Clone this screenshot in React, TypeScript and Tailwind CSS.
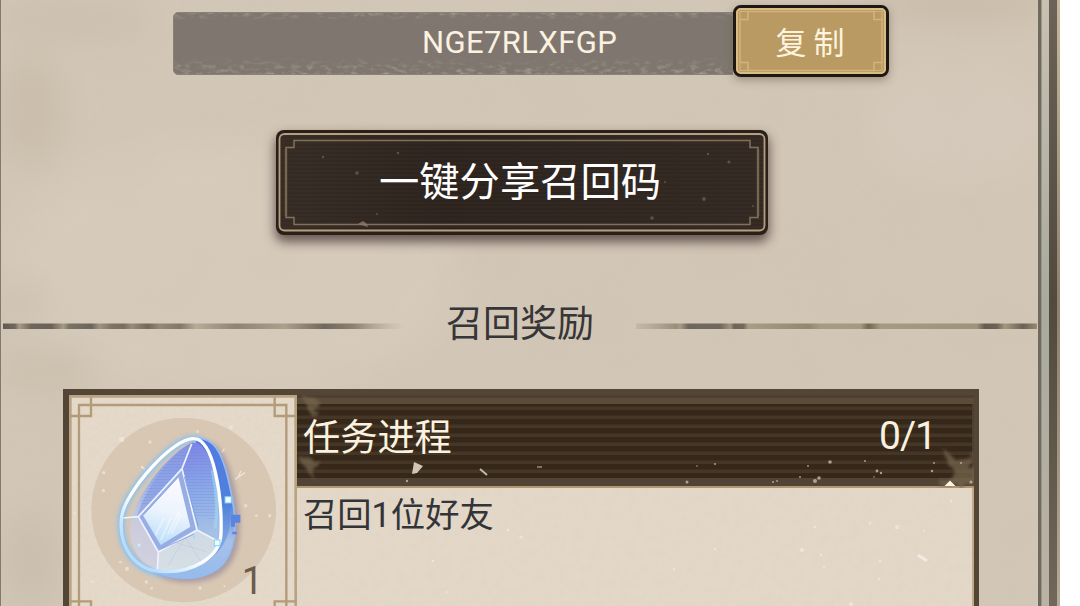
import React from "react";

type Speck = [x: number, y: number, r: number];

type Task = {
  id: number;
  title: string;
  progress: string;
  description: string;
  amount: number;
};

const INVITE_CODE = "NGE7RLXFGP";

const tasks: Task[] = [
  { id: 1, title: "任务进程", progress: "0/1", description: "召回1位好友", amount: 1 },
];

const headerSpecks: Speck[] = [
  [390, 87, 1.5], [476, 87, 1], [480, 86, 0.9], [518, 86, 2], [522, 83, 1.8],
  [511, 71, 0.9], [533, 67, 1.8], [568, 66, 1], [580, 76, 1.4], [584, 78, 1.2],
  [418, 69, 1], [400, 71, 0.8], [635, 76, 1.2], [637, 68, 1], [664, 68, 1],
  [674, 87, 1.5], [110, 86, 1.2], [503, 82, 1], [577, 82, 0.8],
];

const bodySpecks: Speck[] = [
  [518, 39, 1.6], [600, 39, 2], [505, 62, 2], [418, 61, 1.3], [524, 67, 1.2],
  [583, 73, 1.2], [527, 79, 1.1], [554, 116, 2], [582, 91, 1.2], [627, 43, 1],
  [211, 42, 1.6], [224, 49, 1.5], [136, 73, 1.2], [377, 81, 1.2], [654, 13, 1.3],
  [150, 104, 1], [573, 35, 1.3],
];

const buttonSpecks: Speck[] = [
  [47, 27, 1.2], [81, 43, 1.8], [122, 23, 1.3], [101, 84, 1], [432, 24, 1.2],
  [453, 32, 1.6], [428, 69, 1.9], [376, 88, 1.8], [389, 52, 1], [477, 76, 1],
];

// white flecks printed on the icon tile
const tileSpecks: Speck[] = [
  [200, 178, 8], [285, 186, 5], [362, 74, 4], [428, 155, 4], [528, 142, 6],
  [146, 278, 5], [145, 332, 5], [262, 262, 4], [572, 377, 5], [604, 407, 4],
  [644, 407, 5], [216, 566, 6], [274, 606, 5], [290, 625, 4], [435, 624, 5],
  [196, 546, 4], [506, 210, 3], [508, 618, 3], [60, 400, 3], [112, 605, 4],
];

const Specks: React.FC<{ items: Speck[]; fill: string; opacity?: number }> = ({
  items,
  fill,
  opacity = 0.85,
}) => (
  <g fill={fill} opacity={opacity}>
    {items.map(([x, y, r]) => (
      <circle key={`${x}-${y}`} cx={x} cy={y} r={r} />
    ))}
  </g>
);

const Paper: React.FC = () => (
  <svg className="absolute inset-0" width="1037" height="606" aria-hidden>
    <defs>
      <filter id="blot" x="-50%" y="-50%" width="200%" height="200%">
        <feGaussianBlur stdDeviation="16" />
      </filter>
      <filter id="cloud" x="0" y="0" width="100%" height="100%">
        <feTurbulence type="fractalNoise" baseFrequency="0.014" numOctaves="4" seed="8" />
        <feColorMatrix values="0 0 0 0 0.6  0 0 0 0 0.54  0 0 0 0 0.44  1.6 0 0 0 -0.72" />
      </filter>
    </defs>
    <rect width="1037" height="606" fill="#d2c6b6" />
    <g filter="url(#blot)">
      <ellipse cx="230" cy="270" rx="230" ry="130" fill="#d6cabb" />
      <ellipse cx="960" cy="125" rx="90" ry="60" fill="#d5c9bb" />
      <ellipse cx="30" cy="110" rx="34" ry="56" fill="#cabeab" />
      <ellipse cx="70" cy="20" rx="80" ry="18" fill="#cbbfad" />
      <ellipse cx="45" cy="370" rx="50" ry="24" fill="#ccc0ae" />
      <ellipse cx="20" cy="300" rx="20" ry="22" fill="#cec2b1" />
      <ellipse cx="960" cy="5" rx="90" ry="16" fill="#c8baa7" />
      <ellipse cx="30" cy="560" rx="30" ry="50" fill="#cbbfae" />
    </g>
    <rect width="1037" height="606" filter="url(#cloud)" opacity="0.22" />
  </svg>
);

const CodeRow: React.FC = () => (
  <div className="flex pl-[172px] pt-[5px]">
    <div className="relative mt-[7px] flex h-[63px] w-[560px] items-center rounded-l-[5px] border border-[#8b8275] bg-[#7f776f]">
      <svg className="absolute inset-0" width="558" height="61" aria-hidden>
        <defs>
          <filter id="wear" x="0" y="0" width="100%" height="100%">
            <feTurbulence type="fractalNoise" baseFrequency="0.12 0.25" numOctaves="3" seed="3" />
            <feColorMatrix values="0 0 0 0 0.68  0 0 0 0 0.64  0 0 0 0 0.54  1.6 0 0 0 -0.75" />
          </filter>
          <linearGradient id="wearFade" x1="0" y1="0" x2="0" y2="1">
            <stop offset="0" stopColor="#fff" />
            <stop offset="0.120" stopColor="#000" />
            <stop offset="0.700" stopColor="#000" />
            <stop offset="1" stopColor="#fff" />
          </linearGradient>
          <mask id="wearMask">
            <rect width="558" height="61" fill="url(#wearFade)" />
          </mask>
        </defs>
        <g mask="url(#wearMask)">
          <rect width="558" height="61" filter="url(#wear)" opacity="0.7" />
        </g>
      </svg>
      <span className="relative -mt-[3px] pl-[248px] font-[Roboto,sans-serif] text-[31px] leading-none tracking-[0.38px] text-[#fbf1e0]">
        {INVITE_CODE}
      </span>
    </div>
    <button className="relative flex h-[72px] w-[156px] items-center justify-center rounded-[8px] border-[3px] border-[#1d1814] bg-[#b99a62] shadow-[0_3px_8px_rgba(90,75,55,0.45)]">
      <svg className="absolute inset-0" width="150" height="66" fill="none" aria-hidden>
        <rect x="1" y="1" width="148" height="64" rx="4" stroke="#d9bd84" strokeWidth="2" />
        <path
          d="M12 3.500H138V11.500H146V54.500H138V62.500H12V54.500H4V11.500H12Z"
          stroke="#d2b47b"
          strokeWidth="1.500"
        />
        <path
          d="M4 11.500V3.500H12M138 3.500H146V11.500M146 54.500V62.500H138M12 62.500H4V54.500"
          stroke="#d0b27a"
          strokeWidth="1.200"
        />
      </svg>
      <span className="relative -mr-[5px] -mt-[2px] font-['Noto_Sans_CJK_SC',sans-serif] text-[31px] leading-none tracking-[7px] text-[#fdf3de]">
        复制
      </span>
    </button>
  </div>
);

const ShareButton: React.FC = () => (
  <button className="relative ml-[275px] mt-[53px] flex h-[105px] w-[492px] items-center rounded-[8px] bg-[#2b2019] shadow-[0_6px_11px_1px_rgba(78,60,58,0.8)]">
    <svg className="absolute inset-0" width="492" height="105" fill="none" aria-hidden>
      <defs>
        <linearGradient id="lacquer">
          <stop offset="0" stopColor="#362c25" />
          <stop offset="0.35" stopColor="#2d231e" />
          <stop offset="1" stopColor="#332923" />
        </linearGradient>
        <pattern id="weave" width="4" height="4" patternUnits="userSpaceOnUse">
          <path d="M0 1H4" stroke="#463a31" strokeWidth="1" opacity="0.25" />
        </pattern>
      </defs>
      <rect x="4" y="4" width="484" height="97" rx="5" fill="url(#lacquer)" />
      <rect x="4" y="4" width="484" height="97" rx="5" fill="url(#weave)" />
      <rect x="3.500" y="4" width="485" height="96.500" rx="5" stroke="#b59f80" strokeWidth="1.800" />
      <path
        d="M18 10.500H474V17.500H482V87.500H474V94.500H18V87.500H10V17.500H18Z"
        stroke="#82705a"
        strokeWidth="1.500"
      />
      <path d="M482 19V86M10 19V86" stroke="#7a6852" strokeWidth="2.500" opacity="0.7" />
      <Specks items={buttonSpecks} fill="#81695a" opacity={0.6} />
      <path d="M82 94L87 91L91 94L92 97Z" fill="#92776a" opacity="0.8" />
    </svg>
    <span className="relative -mt-[6px] pl-[103px] font-['Noto_Sans_CJK_SC',sans-serif] text-[40.300px] leading-none text-white">
      一键分享召回码
    </span>
  </button>
);

const SectionTitle: React.FC = () => (
  <div className="mt-[59px] flex h-[60px] items-center">
    <svg className="mt-[4px] h-[8px] w-[404px] shrink-0" viewBox="0 0 404 8" aria-hidden>
      <defs>
        <linearGradient id="strokeLeft">
          <stop offset="0" stopColor="#625a50" />
          <stop offset="0.030" stopColor="#71685c" />
          <stop offset="0.040" stopColor="#a79b88" />
          <stop offset="0.070" stopColor="#6f675b" />
          <stop offset="0.120" stopColor="#6b6257" />
          <stop offset="0.150" stopColor="#a69a86" />
          <stop offset="0.165" stopColor="#7b7265" />
          <stop offset="0.220" stopColor="#6c655d" />
          <stop offset="0.240" stopColor="#a0947f" />
          <stop offset="0.270" stopColor="#7e7566" />
          <stop offset="0.300" stopColor="#776e60" />
          <stop offset="0.320" stopColor="#988c79" />
          <stop offset="0.360" stopColor="#72695b" />
          <stop offset="0.390" stopColor="#958a78" />
          <stop offset="0.440" stopColor="#80776a" />
          <stop offset="0.480" stopColor="#b8ac97" />
          <stop offset="0.580" stopColor="#8f8471" />
          <stop offset="0.700" stopColor="#aca08b" />
          <stop offset="0.800" stopColor="#71685d" />
          <stop offset="0.870" stopColor="#8b8171" />
          <stop offset="1" stopColor="#b5a996" stopOpacity="0" />
        </linearGradient>
      </defs>
      <rect x="2" y="1.500" width="402" height="5.500" fill="url(#strokeLeft)" />
    </svg>
    <h2 className="-mt-[5px] w-[231px] pl-[41px] font-['Noto_Sans_CJK_SC',sans-serif] text-[37px] leading-none text-[#363537]">
      召回奖励
    </h2>
    <svg className="mt-[4px] h-[8px] w-[401px] shrink-0" viewBox="0 0 401 8" aria-hidden>
      <defs>
        <linearGradient id="strokeRight">
          <stop offset="0" stopColor="#b5a996" stopOpacity="0.500" />
          <stop offset="0.100" stopColor="#9a8e7b" />
          <stop offset="0.110" stopColor="#a79b87" />
          <stop offset="0.130" stopColor="#70675c" />
          <stop offset="0.210" stopColor="#70675f" />
          <stop offset="0.235" stopColor="#a1957f" />
          <stop offset="0.245" stopColor="#6f6458" />
          <stop offset="0.268" stopColor="#746959" />
          <stop offset="0.280" stopColor="#aa9d87" />
          <stop offset="0.430" stopColor="#93876f" />
          <stop offset="0.460" stopColor="#a89b84" />
          <stop offset="0.560" stopColor="#a59981" />
          <stop offset="0.580" stopColor="#736853" />
          <stop offset="0.610" stopColor="#a69a83" />
          <stop offset="0.850" stopColor="#9f937b" />
          <stop offset="0.870" stopColor="#655a4d" />
          <stop offset="0.900" stopColor="#6d6253" />
          <stop offset="0.920" stopColor="#a5987f" />
          <stop offset="0.965" stopColor="#6b6152" />
          <stop offset="1" stopColor="#968a73" />
        </linearGradient>
      </defs>
      <rect y="1.500" width="401" height="5.500" fill="url(#strokeRight)" />
    </svg>
  </div>
);

const Gem: React.FC = () => (
  <svg width="228" height="211" viewBox="42 45 684 633" fill="none" aria-hidden>
    <defs>
      <linearGradient id="gemFace" x1="430" y1="180" x2="330" y2="575" gradientUnits="userSpaceOnUse">
        <stop offset="0" stopColor="#8388e6" />
        <stop offset="0.350" stopColor="#94afe9" />
        <stop offset="0.700" stopColor="#c3cde2" />
        <stop offset="1" stopColor="#dfe4e8" />
      </linearGradient>
      <linearGradient id="gemSide" x1="470" y1="180" x2="470" y2="600" gradientUnits="userSpaceOnUse">
        <stop offset="0" stopColor="#5577e6" />
        <stop offset="0.450" stopColor="#4d80dc" />
        <stop offset="0.720" stopColor="#a9c1e9" />
        <stop offset="1" stopColor="#93bbeb" />
      </linearGradient>
      <linearGradient id="gemPlane" x1="400" y1="180" x2="470" y2="460" gradientUnits="userSpaceOnUse">
        <stop offset="0" stopColor="#7d82e2" />
        <stop offset="0.550" stopColor="#8daae8" />
        <stop offset="1" stopColor="#a6c1e5" />
      </linearGradient>
      <linearGradient id="gemCore" x1="370" y1="300" x2="320" y2="490" gradientUnits="userSpaceOnUse">
        <stop offset="0" stopColor="#fbf9ff" />
        <stop offset="0.500" stopColor="#edf4fd" />
        <stop offset="1" stopColor="#bbdffa" />
      </linearGradient>
      <linearGradient id="gemRim" x1="200" y1="480" x2="450" y2="230" gradientUnits="userSpaceOnUse">
        <stop offset="0" stopColor="#b4dcff" />
        <stop offset="0.350" stopColor="#ffffff" />
        <stop offset="1" stopColor="#ffffff" />
      </linearGradient>
      <pattern id="scan" width="9" height="9" patternUnits="userSpaceOnUse">
        <rect width="9" height="3" fill="#5c81de" opacity="0.220" />
      </pattern>
      <filter id="glow" x="-30%" y="-30%" width="160%" height="160%">
        <feGaussianBlur stdDeviation="8" />
      </filter>
      <filter id="tileGrain" x="0" y="0" width="100%" height="100%">
        <feTurbulence type="fractalNoise" baseFrequency="0.080" numOctaves="3" seed="5" />
        <feColorMatrix values="0 0 0 0 0.65  0 0 0 0 0.55  0 0 0 0 0.45  1 0 0 0 -0.35" />
      </filter>
      <filter id="soften" x="0" y="0" width="100%" height="100%">
        <feGaussianBlur stdDeviation="1.500" />
      </filter>
    </defs>

    <rect x="42" y="45" width="684" height="633" fill="#e5d9ca" />
    <circle cx="386" cy="390" r="277" fill="#d8c7b3" filter="url(#soften)" />
    <rect x="42" y="45" width="684" height="633" filter="url(#tileGrain)" opacity="0.300" />
    <Specks items={tileSpecks} fill="#f2e9dc" opacity={0.7} />
    <path
      d="M540 298L570 278M550 290L558 272M500 218L508 206M270 268L258 260"
      stroke="#f4ebdf"
      strokeWidth="4"
      opacity="0.8"
    />

    {/* frame */}
    <g stroke="#b19b78" strokeWidth="7">
      <path d="M46 678V49H722V678" strokeWidth="8" stroke="#b9a383" />
      <path d="M72 678V75H694V678" />
      <path d="M46 108H108V52M722 108H659V52M46 664H108V678M722 664H659V678" />
    </g>

    {/* gem */}
    <path
      d="M430 176C485 172 512 235 530 315C548 400 560 505 500 562C455 610 350 606 305 582L240 500Z"
      fill="#776a8b"
      opacity="0.450"
      transform="translate(10 8)"
      filter="url(#glow)"
    />
    <path
      d="M418 176C356 170 210 335 200 410C188 505 245 570 315 578C405 586 500 535 498 455C501 350 477 180 418 176Z"
      stroke="#75bfff"
      strokeWidth="17"
      filter="url(#glow)"
    />
    <path
      d="M418 174C478 170 502 221 520 300C541 390 556 485 508 548C464 600 375 606 305 577L480 500Z"
      fill="url(#gemSide)"
      stroke="#91bdf8"
      strokeWidth="5"
    />
    <path
      d="M462 190C497 240 502 340 503 455C497 500 480 525 450 548C510 510 529 460 526 390C520 310 504 222 462 190Z"
      fill="#4f82db"
      opacity="0.450"
    />
    <path
      d="M410 188C340 220 238 350 227 430C216 510 270 572 345 574C430 572 490 530 490 455C492 350 471 180 410 188Z"
      fill="url(#gemFace)"
      opacity="0.940"
    />
    <path d="M412 190L381 266L426 450L489 484C503 360 475 180 412 190Z" fill="url(#gemPlane)" />
    <path d="M410 192L381 266L245 410C270 330 330 240 410 192Z" fill="#8799e3" opacity="0.600" />
    <path d="M245 410L310 516V570C250 560 224 500 227 430Z" fill="#cdcadd" opacity="0.700" />
    <path d="M310 516L426 450L488 484C478 540 400 579 310 571Z" fill="#d5dfe5" opacity="0.800" />
    <path d="M391 472L340 555M391 472L440 548M365 489L455 515" stroke="#b7c7d6" strokeWidth="3" opacity="0.500" />
    <path
      d="M410 192C340 230 282 300 255 370L480 420C490 330 470 190 410 192Z"
      fill="url(#scan)"
    />
    <path d="M472 270C486 330 488 400 480 445" stroke="#9de2f4" strokeWidth="10" opacity="0.500" />
    <path d="M381 266L250 410L310 516L426 450Z" fill="#98ade4" />
    <path d="M370 291L264 406L317 495L406 440Z" fill="url(#gemCore)" />
    <path
      d="M301 466L327 414M317 480L350 410M338 464L374 391M350 460L378 402"
      stroke="#ffffff"
      strokeWidth="6"
      opacity="0.400"
    />
    <path
      d="M410 192L381 266L250 410L310 516L426 450L489 484M381 266L426 450M250 410L205 414M310 516L307 571"
      stroke="#edf4ff"
      strokeWidth="5"
      strokeLinejoin="round"
    />
    <path d="M370 291L264 406M388 291L430 440M318 507L418 462" stroke="#7f9ed8" strokeWidth="2.500" />
    <path
      d="M418 176C356 170 210 335 200 410C188 505 245 570 315 574C405 582 500 535 498 455C501 350 477 180 418 176Z"
      stroke="url(#gemRim)"
      strokeWidth="10"
    />
    <path d="M528 404H556V428H540V440H528ZM532 455H545V463H532Z" fill="#5b84e0" />
    <rect x="510" y="350" width="19" height="19" fill="#f5ffff" stroke="#79c8ff" strokeWidth="3" />
    <rect x="478" y="480" width="17" height="17" fill="#f5ffff" stroke="#79d4ff" strokeWidth="3" />
    <rect x="248" y="491" width="8" height="8" fill="#cdf0ff" />
    <rect x="414" y="468" width="7" height="7" fill="#9fddff" />
  </svg>
);

const TaskCard: React.FC<{ task: Task }> = ({ task }) => (
  <article className="mx-[62px] flex h-[217px] w-[916px] border-l-[6px] border-r-[5px] border-t-[6px] border-[#534637] bg-[#e3d7c8]">
    <div className="relative h-[211px] w-[228px] shrink-0">
      <Gem />
      <span className="absolute bottom-[6px] right-[34px] font-[Roboto,sans-serif] text-[38px] leading-none text-[#6d5b49]">
        {task.amount}
      </span>
    </div>
    <div className="flex w-[677px] flex-col">
      <header className="relative flex h-[93px] items-center justify-between pb-[11px] pl-[6px] pr-[38px] text-[#fbf1df]">
        <svg className="absolute inset-0" width="677" height="93" aria-hidden>
          <defs>
            <pattern id="slats" width="9" height="9" patternUnits="userSpaceOnUse">
              <rect width="9" height="9" fill="#35281a" />
              <rect y="2.500" width="9" height="3.500" fill="#453626" />
            </pattern>
            <filter id="dust" x="-20%" y="-20%" width="140%" height="140%">
              <feTurbulence type="fractalNoise" baseFrequency="0.080" numOctaves="3" seed="11" />
              <feDisplacementMap in="SourceGraphic" scale="16" />
              <feGaussianBlur stdDeviation="1.800" />
            </filter>
          </defs>
          <rect width="677" height="93" fill="#4d3f31" />
          <rect y="3" width="677" height="6" fill="#5b4c39" />
          <rect y="9" width="675" height="74" fill="url(#slats)" />
          <rect y="83" width="677" height="8" fill="#524335" />
          <rect y="91" width="677" height="2" fill="#b09875" />
          <g filter="url(#dust)" fill="#78674f" opacity="0.700">
            <path d="M4 0L22 6L18 22L26 28L14 20Z" />
            <path d="M0 62L22 64L14 74L18 86L8 72Z" />
            <path d="M643 50L660 66L677 58V92H640L656 76Z" />
          </g>
          <path d="M117 67L126 71L120 78L115 79Z" fill="#e2d6c5" opacity="0.9" />
          <path d="M183 74L190 80" stroke="#cbbda8" strokeWidth="1.800" />
          <path d="M240 72H245" stroke="#9b8b74" strokeWidth="1.500" />
          <path d="M653 87L656 90H650Z" fill="#fff5e5" stroke="#fff5e5" strokeWidth="2" />
          <Specks items={headerSpecks} fill="#d9cab6" opacity={0.7} />
        </svg>
        <h3 className="relative font-['Noto_Sans_CJK_SC',sans-serif] text-[37.200px] leading-none">{task.title}</h3>
        <span className="relative font-[Roboto,sans-serif] text-[39px] leading-none tracking-[-1px]">{task.progress}</span>
      </header>
      <div className="relative h-[118px] pl-[6px] pt-[10px]">
        <svg className="absolute inset-0" width="677" height="118" aria-hidden>
          <defs>
            <filter id="bodyGrain" x="0" y="0" width="100%" height="100%">
              <feTurbulence type="fractalNoise" baseFrequency="0.130" numOctaves="3" seed="2" />
              <feColorMatrix values="0 0 0 0 0.68  0 0 0 0 0.57  0 0 0 0 0.48  1 0 0 0 -0.35" />
            </filter>
          </defs>
          <rect width="677" height="118" filter="url(#bodyGrain)" opacity="0.250" />
          <rect x="675" width="2" height="118" fill="#c3aa87" />
          <path d="M621 67L630 73" stroke="#f3ebe0" strokeWidth="3" />
          <Specks items={bodySpecks} fill="#f2eade" opacity={0.75} />
        </svg>
        <p className="relative font-[Roboto,'Noto_Sans_CJK_SC',sans-serif] text-[34.300px] leading-none text-[#323438]">
          {task.description}
        </p>
      </div>
    </div>
  </article>
);

// weathered double rail along the right edge of the panel
const RightRail: React.FC = () => (
  <div className="flex h-full w-[22px]">
    <div className="w-[3px] bg-[#706a5e]" />
    <div className="w-px bg-[#99978b]" />
    <div className="w-[7px] bg-linear-to-b from-[#c9c0b2] via-[#a9aaa0] to-[#bcb2a4]" />
    <div className="w-[8px] bg-linear-to-b from-[#6c6258] via-[#514a3d] to-[#71675b]" />
    <div className="w-[3px] bg-linear-to-b from-[#c7b79f] via-[#8f816c] to-[#b6a998]" />
  </div>
);

const App: React.FC = () => {
  return (
    <div className="flex h-[606px] w-[1080px] overflow-hidden bg-white">
      <div className="w-px bg-[#83796c]" />
      <main className="relative w-[1037px] shrink-0 overflow-hidden">
        <Paper />
        <div className="relative">
          <CodeRow />
          <ShareButton />
          <SectionTitle />
          <div className="pt-[35px]">
            {tasks.map((task) => (
              <TaskCard key={task.id} task={task} />
            ))}
          </div>
        </div>
      </main>
      <RightRail />
    </div>
  );
};

export default App;
